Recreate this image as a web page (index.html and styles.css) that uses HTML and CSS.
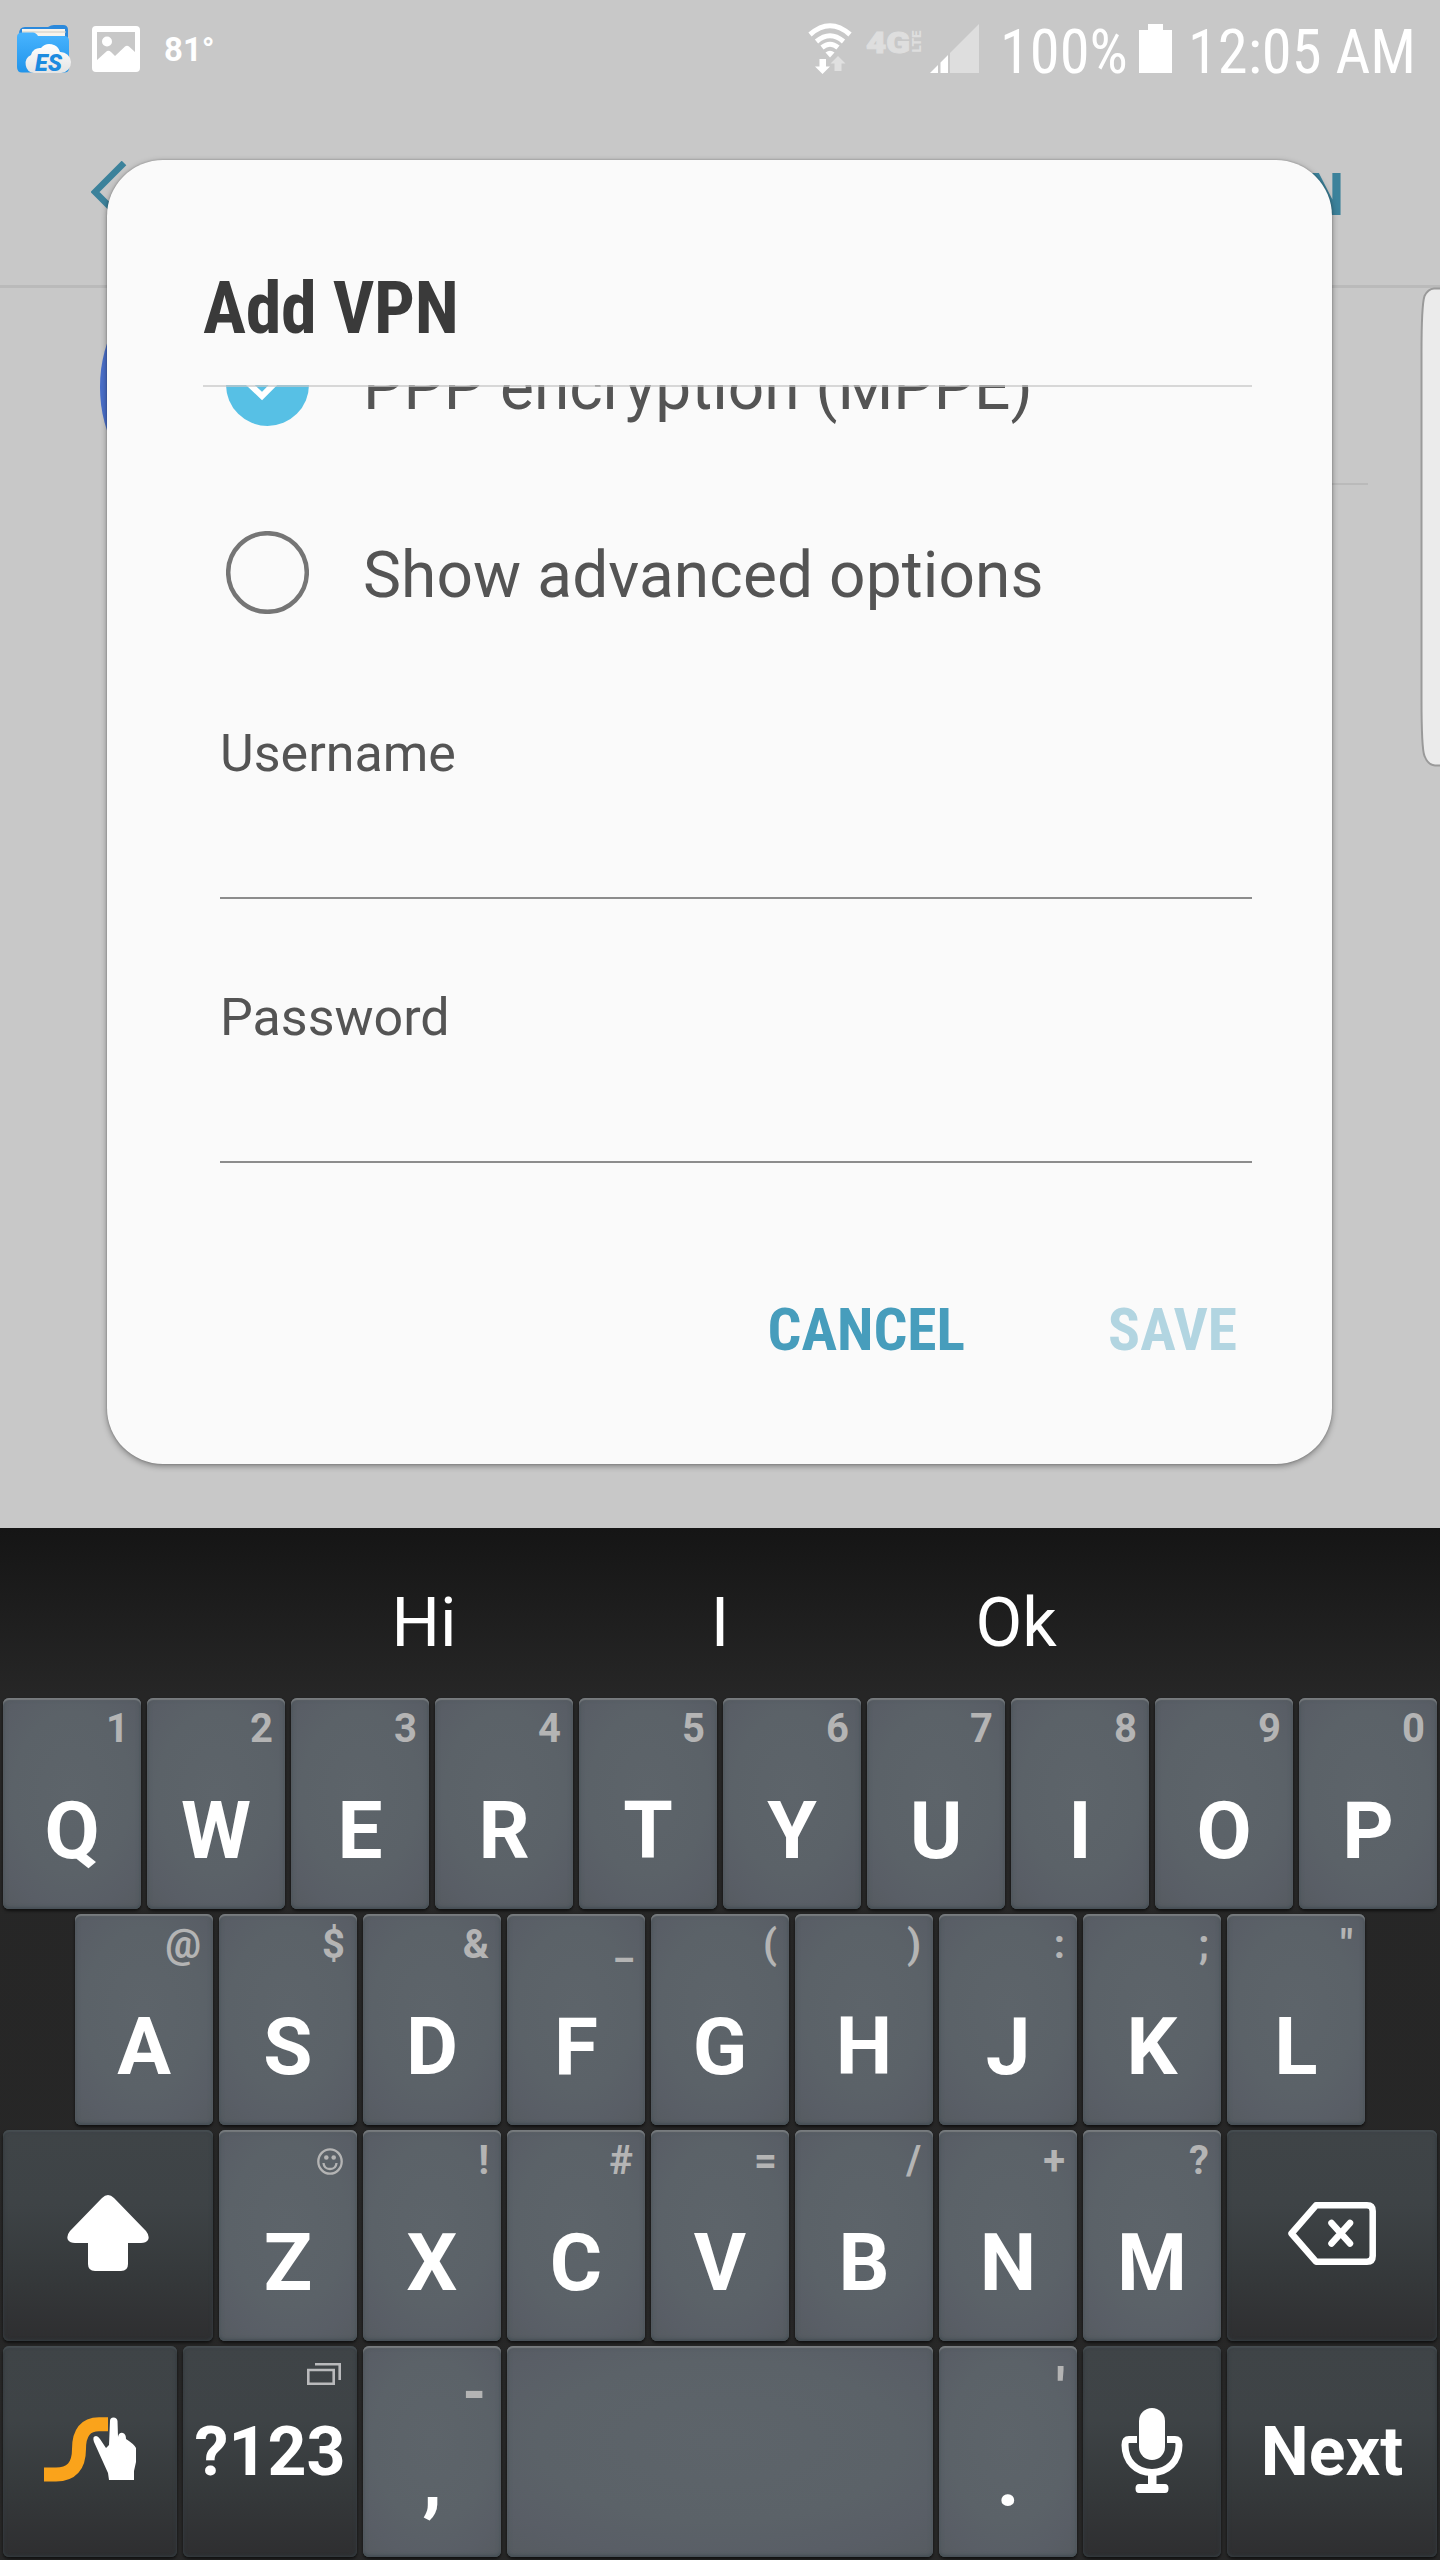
FILE: index.html
```html
<!DOCTYPE html>
<html lang="en">
<head>
<meta charset="utf-8">
<title>Add VPN</title>
<link rel="stylesheet" href="styles.css">
</head>
<body>
<div class="screen">
  <main class="app">
    <header class="status">
      <div class="status-left">
        <svg class="ic-es" width="56" height="52" viewBox="0 0 56 52">
          <defs>
            <linearGradient id="folder" x1="0" y1="0" x2="0" y2="1"><stop offset="0" stop-color="#48b4ff"/><stop offset="1" stop-color="#2194ea"/></linearGradient>
            <linearGradient id="cloud" x1="0" y1="0" x2="0" y2="1"><stop offset="0" stop-color="#fff"/><stop offset="1" stop-color="#e4e4e4"/></linearGradient>
          </defs>
          <path d="M2 10Q2 3 8 3H31Q34 1 37 1H46Q51 1 51 6V20H2Z" fill="#2b89dc"/>
          <path d="M5 5H48V12H5Z" fill="#f6f3ec"/><path d="M5 8H49" stroke="#cfcac0" stroke-width="1"/>
          <path d="M0 13Q0 8.500 5 8.500H16Q19 8.500 21 12H47Q52 12 52 17V44Q52 48.500 47 48.500H5Q0 48.500 0 43Z" fill="url(#folder)"/>
          <path d="M17 49A9.500 9.500 0 0 1 14 31A9 9 0 0 1 24 24A11 11 0 0 1 43 28A10.500 10.500 0 1 1 44 49Z" fill="url(#cloud)"/>
          <text x="18" y="46.500" class="es-text" textLength="27" lengthAdjust="spacingAndGlyphs">ES</text>
        </svg>
        <svg class="ic-pic" width="48" height="46" viewBox="0 0 48 46" fill="#fff">
          <path fill-rule="evenodd" d="M4 0H44Q48 0 48 4V42Q48 46 44 46H4Q0 46 0 42V4Q0 0 4 0ZM5 6V34L15 25Q17 24 19 26L23 30L33 20.500Q35 19 37 20.500L43 26V6Z"/>
          <circle cx="15" cy="15.500" r="5"/>
        </svg>
        <span class="temp">81°</span>
      </div>
      <div class="status-right">
        <svg class="ic-wifi" width="44" height="50" viewBox="0 0 44 50">
          <g fill="none" stroke="#fff" stroke-width="5">
            <path d="M2 11.500Q22 -6 42 11.500"/><path d="M8.500 18.500Q22 7 35.500 18.500"/><path d="M14 24.500Q22 18 30 24.500"/>
          </g>
          <path d="M17.500 29.500Q22 26 26.500 29.500L22 34.500Z" fill="#fff"/>
          <path d="M11.500 36H18V43.500H22L14.500 51L7 43.500H11.500Z" fill="#fff"/>
          <path d="M26.500 48V40.500H22.500L30 33L37.500 40.500H33.500V48Z" fill="#e0e0e0"/>
        </svg>
        <svg class="ic-lte" width="55" height="24" viewBox="0 0 55 24" fill="#dedede" stroke="#dedede">
          <text x="0" y="22.500" class="lte-main" stroke-width="1" textLength="44" lengthAdjust="spacingAndGlyphs">4G</text>
          <text transform="translate(54.500 22.500) rotate(-90)" class="lte-sub" stroke-width="0" textLength="22" lengthAdjust="spacingAndGlyphs">LTE</text>
        </svg>
        <svg class="ic-signal" width="50" height="49" viewBox="0 0 50 49">
          <path d="M0 49L8 41V49ZM10.500 49V38.500L18 31V49Z" fill="#fff"/><path d="M20 49V29L49 0V49Z" fill="#dedede"/>
        </svg>
        <span class="stext pct">100%</span>
        <svg class="ic-batt" width="33" height="49" viewBox="0 0 33 49"><path d="M9 0H24V6H33V49H0V6H9Z" fill="#fff"/></svg>
        <span class="stext clock">12:05 AM</span>
      </div>
    </header>
    <div class="appbar">
      <svg class="back" width="36" height="62" viewBox="0 0 36 62"><path d="M33 2L4 31L33 60" fill="none" stroke="#3c829b" stroke-width="6.500"/></svg>
      <span class="appbar-action">ADD VPN</span>
    </div>
    <div class="list-row">
      <div class="list-dot"></div>
      <div class="list-body"></div>
    </div>
    <svg class="edge" width="20" height="480" viewBox="0 0 20 480"><path d="M22 1.500H14Q8 2 4.500 9Q1.500 18 1.500 66V412Q1.500 462 4.500 469Q8 478 15 478.500H22" fill="#ebebeb" stroke="#9a9a9a" stroke-width="2"/></svg>

    <section class="dialog">
      <h1 class="title">Add VPN</h1>
      <div class="scroll">
        <div class="option option-cut">
          <svg width="83" height="83" viewBox="0 0 83 83"><circle cx="41.500" cy="41.500" r="41.500" fill="#57c0e5"/><path d="M18 36L36 53L64 25" fill="none" stroke="#fff" stroke-width="6"/></svg>
          <span class="option-label">PPP encryption (MPPE)</span>
        </div>
        <div class="option">
          <svg width="83" height="83" viewBox="0 0 83 83"><circle cx="41.500" cy="41.500" r="39.300" fill="none" stroke="#757575" stroke-width="4.500"/></svg>
          <span class="option-label label-adv">Show advanced options</span>
        </div>
        <label class="field"><span>Username</span></label>
        <label class="field"><span>Password</span></label>
      </div>
      <div class="actions">
        <span class="cancel">CANCEL</span>
        <span class="save">SAVE</span>
      </div>
    </section>
  </main>

  <section class="keyboard">
    <div class="suggest"><span>Hi</span><span>I</span><span>Ok</span></div>
    <div class="keys">
      <div class="krow">
        <div class="key"><i>1</i><b>Q</b></div><div class="key"><i>2</i><b>W</b></div><div class="key"><i>3</i><b>E</b></div><div class="key"><i>4</i><b>R</b></div><div class="key"><i>5</i><b>T</b></div><div class="key"><i>6</i><b>Y</b></div><div class="key"><i>7</i><b>U</b></div><div class="key"><i>8</i><b>I</b></div><div class="key"><i>9</i><b>O</b></div><div class="key"><i>0</i><b>P</b></div>
      </div>
      <div class="krow krow-mid">
        <div class="key"><i>@</i><b>A</b></div><div class="key"><i>$</i><b>S</b></div><div class="key"><i>&amp;</i><b>D</b></div><div class="key"><i>_</i><b>F</b></div><div class="key"><i>(</i><b>G</b></div><div class="key"><i>)</i><b>H</b></div><div class="key"><i>:</i><b>J</b></div><div class="key"><i>;</i><b>K</b></div><div class="key"><i>"</i><b>L</b></div>
      </div>
      <div class="krow">
        <div class="key dark w210">
          <svg class="raised" width="82" height="76" viewBox="0 0 82 76"><path d="M35 3Q41 -3 47 3L79 36Q83 41 81 45Q79 48 74 48H61V69Q61 76 54 76H28Q21 76 21 69V48H8Q3 48 1 45Q-1 41 3 36Z" fill="#fff"/></svg>
        </div>
        <div class="key"><i class="glyph"><svg width="26" height="27" viewBox="0 0 26 27"><ellipse cx="13" cy="13.500" rx="11.700" ry="12.200" fill="none" stroke="#b4b4b4" stroke-width="2.300"/><circle cx="9.300" cy="9.500" r="2.300" fill="#b4b4b4"/><circle cx="16.700" cy="9.500" r="2.300" fill="#b4b4b4"/><path d="M6.500 15Q7 21 13 21T19.500 15" fill="none" stroke="#b4b4b4" stroke-width="2.300"/></svg></i><b>Z</b></div><div class="key"><i>!</i><b>X</b></div><div class="key"><i>#</i><b>C</b></div><div class="key"><i>=</i><b>V</b></div><div class="key"><i>/</i><b>B</b></div><div class="key"><i>+</i><b>N</b></div><div class="key"><i>?</i><b>M</b></div>
        <div class="key dark w210">
          <svg class="raised" width="88" height="63" viewBox="0 0 88 63" fill="none" stroke="#fff" stroke-width="6.500" stroke-linejoin="round"><path d="M28 3.300H79Q84.700 3.300 84.700 9V54Q84.700 59.700 79 59.700H28L3.500 31.500Z"/><path d="M43.500 21L62 41.500M62 21L43.500 41.500" stroke-linecap="round"/></svg>
        </div>
      </div>
      <div class="krow">
        <div class="key dark w174">
          <svg class="raised" width="93" height="65" viewBox="0 0 93 65"><path d="M0 57.500H12Q35 57.500 35 32Q35 7.300 55 7.300H64" fill="none" stroke="#faa31b" stroke-width="14"/><path d="M66 4Q66 .5 69.500 .5T73.500 4L74 20Q75 15 79 16Q82 17 82 22Q90 27 92 31V45L90 54V63H65L64 56L50 25Q48 19 52 19Q54 19 56 22L62 31L65 28Z" fill="#fff"/></svg>
        </div>
        <div class="key dark w174 sym">
          <svg class="win" width="34" height="23" viewBox="0 0 34 23" fill="none" stroke="#b9babc" stroke-width="2.600"><path d="M1.300 7H26.700V20.700H1.300Z"/><path d="M8 1.300H32.700V17"/></svg>
          <b>?123</b>
        </div>
        <div class="key"><i class="low low-dash">-</i><b>,</b></div>
        <div class="key w426"></div>
        <div class="key"><i class="low">'</i><b>.</b></div>
        <div class="key dark">
          <svg class="mic" width="62" height="85" viewBox="0 0 62 85"><rect x="18" y="0" width="26" height="52" rx="13" fill="#fff"/><path d="M16 31.500H8Q4 31.500 4 37C4 53 15 64.500 31 64.500S58 53 58 37Q58 31.500 54 31.500H46" fill="none" stroke="#fff" stroke-width="7"/><path d="M27 64H35.500V76H44Q47.500 76 47.500 80.500T44 85H18Q14.500 85 14.500 80.500T18 76H27Z" fill="#fff"/></svg>
        </div>
        <div class="key dark w210 sym"><b>Next</b></div>
      </div>
    </div>
  </section>
</div>
</body>
</html>
```
FILE: styles.css
```css
* { box-sizing: border-box; }
body {
  margin: 0;
  font-family: Roboto, "Liberation Sans", sans-serif;
}
.screen {
  width: 1440px;
  height: 2560px;
  display: flex;
  flex-direction: column;
  overflow: hidden;
}
.app {
  position: relative;
  height: 1528px;
  background: #c8c8c8;
}

/* status bar */
.status {
  height: 96px;
  display: flex;
  justify-content: space-between;
  padding: 0 26px 0 17px;
  color: #fff;
}
.status-left, .status-right { display: flex; align-items: flex-start; }
.status svg { flex: none; overflow: visible; }
.ic-es { margin-top: 24px; }
.es-text { font: italic 900 24px Roboto, sans-serif; fill: #1c8be0; }
.ic-pic { margin: 26px 0 0 19px; }
.temp {
  font: 700 33px/40px Roboto, sans-serif;
  margin: 30px 0 0 24px;
}
.ic-wifi { margin: 23px 14px 0 0; }
.ic-lte { margin: 30px 9px 0 0; }
.lte-main { font: 900 30px Roboto, sans-serif; }
.lte-sub { font: 900 12.5px Roboto, sans-serif; }
.ic-signal { margin: 24px 20px 0 0; }
.ic-batt { margin-top: 24px; }
.stext {
  font: 400 60.5px/70px "Roboto Condensed", Roboto, sans-serif;
  font-stretch: 75%;
  margin-top: 17.5px;
  white-space: nowrap;
}
.pct { width: 139px; }
.clock { width: 226px; margin-left: 16px; }

/* page behind the dialog */
.appbar {
  height: 192px;
  border-bottom: 3px solid #bababa;
  display: flex;
  justify-content: space-between;
  padding: 65px 96px 0 91px;
}
.appbar-action {
  font: 700 60px/70px "Roboto Condensed", Roboto, sans-serif;
  font-stretch: 75%;
  color: #3c829b;
  margin-top: -1px;
}
.list-row {
  height: 197px;
  margin: 0 72px 0 100px;
  display: flex;
  align-items: center;
  gap: 40px;
}
.list-dot {
  width: 120px;
  height: 186px;
  border-radius: 50%;
  background: #4a6fc9;
}
.list-body {
  flex: 1;
  align-self: stretch;
  border-bottom: 2px solid #bababa;
}
.edge { position: absolute; right: 0; top: 287px; }

/* dialog */
.dialog {
  position: absolute;
  left: 107px;
  top: 160px;
  width: 1225px;
  height: 1304px;
  border-radius: 56px;
  background: #fafafa;
  box-shadow: 0 2px 6px rgba(0,0,0,.38), 0 0 2px rgba(0,0,0,.25);
  padding: 0 80px 0 96px;
}
.title {
  font: 700 72px/84px "Roboto Condensed", Roboto, sans-serif;
  font-stretch: 75%;
  letter-spacing: -.3px;
  color: #3a3a3a;
  margin: 0;
  padding: 107px 0 34px;
  height: 225px;
  white-space: nowrap;
}
.scroll {
  position: relative;
  height: 800px;
  overflow: hidden;
  padding-left: 17px;
}
.scroll::before {
  content: "";
  position: absolute;
  left: 0;
  right: 0;
  top: 0;
  height: 2px;
  background: rgba(200,200,200,.7);
}
.option {
  height: 188px;
  display: flex;
  align-items: center;
  padding-left: 6px;
}
.option-cut { margin-top: -95px; }
.option-label {
  font-size: 64px;
  line-height: 76px;
  color: #545454;
  margin-left: 54px;
  padding-top: 7px;
  white-space: nowrap;
}
.label-adv { letter-spacing: .1px; padding-top: 8px; }
.field {
  display: block;
  height: 264px;
  border-bottom: 2px solid #8c8c8c;
  color: #545454;
}
.option + .field { height: 233px; }
.field span {
  display: block;
  font-size: 52px;
  line-height: 60px;
}
.option + .field span { padding-top: 58px; }
.field + .field span { padding-top: 89px; }
.actions {
  display: flex;
  justify-content: flex-end;
  gap: 143px;
  padding: 110px 15px 0 0;
  font: 700 59.5px/70px "Roboto Condensed", Roboto, sans-serif;
  font-stretch: 75%;
}
.cancel { color: #479dbc; }
.save { color: #b2d5e1; }

/* keyboard */
.keyboard {
  height: 1032px;
  background: linear-gradient(#151515, #262626 165px, #272727);
}
.suggest {
  height: 170px;
  padding: 0 276px;
  display: grid;
  grid-template-columns: repeat(3, 296px);
  text-align: center;
  color: #fff;
  font-size: 68px;
  line-height: 190px;
}
.keys { display: flex; flex-direction: column; gap: 5px; }
.krow { display: flex; gap: 6px; padding: 0 3px; }
.krow-mid { padding: 0 75px; }
.key {
  width: 138px;
  height: 211px;
  flex: none;
  display: flex;
  flex-direction: column;
  border-radius: 6px;
  color: #fff;
  background: radial-gradient(ellipse 95% 85% at 50% 45%, #5d646a 0%, #5b6268 45%, #595e66 65%, #53585b 100%);
  box-shadow: inset 0 2px 1px #777b7e, inset 0 -2px 2px #485157, inset 0 0 5px rgba(70,80,85,.8), 0 2px 3px rgba(0,0,0,.6);
}
.key i {
  font: 700 40px/61px Roboto, sans-serif;
  height: 60px;
  text-align: right;
  padding-right: 12px;
  color: #b4b4b4;
}
.key i.glyph { padding: 18px 14px 0 0; line-height: 0; }
.key i.low { font-size: 56px; line-height: 85px; }
.key i.low-dash { font-weight: 900; line-height: 94px; padding-right: 14px; }
.key b { font: 700 80px/147px Roboto, sans-serif; text-align: center; }
.dark {
  align-items: center;
  justify-content: center;
  background: linear-gradient(#3f4447, #3e4346 35%, #363a3c 65%, #2e2e30);
  box-shadow: inset 0 2px 1px #454c50, inset 0 -1px 2px #333a3e, inset 0 0 4px #343b3f, 0 2px 3px rgba(0,0,0,.6);
}
.w174 { width: 174px; }
.w210 { width: 210px; }
.w426 { width: 426px; }
.raised { margin-bottom: 5px; }
.mic { margin-bottom: 3px; }
.sym { position: relative; }
.sym b { font-size: 68px; line-height: 80px; }
.win { position: absolute; right: 16px; top: 17px; }
```
